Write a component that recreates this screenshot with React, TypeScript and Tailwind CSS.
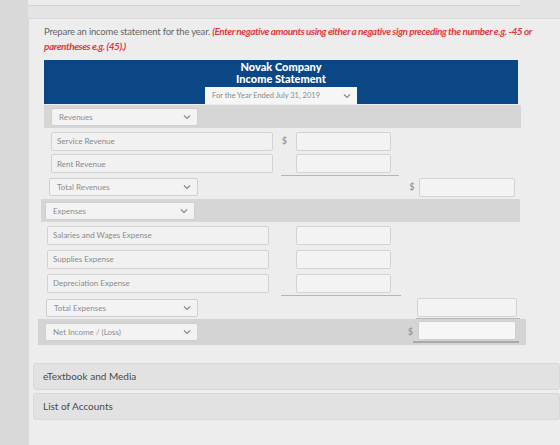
import React from "react";

const Chevron = () => (
  <svg width="8" height="6" viewBox="0 0 8 6" className="shrink-0">
    <path d="M1 1.5 L4 4.5 L7 1.5" fill="none" stroke="#8a8a8a" strokeWidth="1.2" />
  </svg>
);

const Select = ({ label, w = "w-[147px]" }: { label: string; w?: string }) => (
  <div
    className={`${w} h-[18px] bg-[#f3f3f3] border border-[#cfcfcf] rounded-[2px] flex items-center justify-between pl-[7px] pr-[6px] text-[8px] text-[#8d8d8d]`}
  >
    <span>{label}</span>
    <Chevron />
  </div>
);

const TextBox = ({ label }: { label: string }) => (
  <div className="w-[222px] h-[19px] bg-[#f1f1f1] border border-[#d3d3d3] rounded-[2px] flex items-center pl-[5px] text-[8px] text-[#8a8a8a]">
    {label}
  </div>
);

const Num = ({ w = "w-[95px]" }: { w?: string }) => (
  <div className={`${w} h-[19px] bg-[#f3f3f3] border border-[#d3d3d3] rounded-[2px]`} />
);

const Dollar = () => <span className="text-[8.5px] font-bold text-[#9a9a9a]">$</span>;

export default function App() {
  return (
    <div
      className="w-[560px] h-[445px] overflow-hidden bg-[#dcdcdc] flex"
      style={{ fontFamily: "Lato, 'Open Sans', sans-serif" }}
    >
      <div className="w-[28px] shrink-0 bg-[#d9d9d9]" />
      <div className="flex-1 flex flex-col bg-[#e4e4e4]">
        <div className="h-[6px] w-[492px] bg-[#ececec] border-b border-[#d4d4d4]" />
        <div className="h-[12px]" />
        <div className="flex-1 bg-[#ededed] border-t border-l border-[#dadada] pl-[15px] pt-[5px] flex flex-col">
          <p className="text-[9.5px] leading-[15px] text-[#666] tracking-[-0.2px] whitespace-nowrap">
            Prepare an income statement for the year.{" "}
            <span className="text-[10px] text-[#e0393e] font-bold italic tracking-[-0.45px]">
              (Enter negative amounts using either a negative sign preceding the number e.g. -45 or
            </span>
            <br />
            <span className="text-[10px] text-[#e0393e] font-bold italic tracking-[-0.45px]">
              parentheses e.g. (45).)
            </span>
          </p>

          <div className="mt-[6px] w-[474px] flex flex-col">
            {/* header */}
            <div className="h-[44px] bg-[#0b4685] flex flex-col items-center pt-[1px]">
              <div className="text-[11px] leading-[12px] font-black text-white">Novak Company</div>
              <div className="text-[11px] leading-[12px] font-black text-white">Income Statement</div>
              <div className="mt-[2px] w-[152px] h-[17px] bg-[#f6f6f6] flex items-center justify-between pl-[7px] pr-[6px] text-[7.5px] text-[#8a8a8a]">
                <span>For the Year Ended July 31, 2019</span>
                <Chevron />
              </div>
            </div>

            {/* Revenues */}
            <div className="mt-[1px] h-[23px] bg-[#d6d6d6] flex items-center pl-[7px] w-[477px]">
              <Select label="Revenues" />
            </div>

            <div className="h-[24px] flex items-center pl-[7px] mt-[1px]">
              <TextBox label="Service Revenue" />
              <div className="w-[23px] flex justify-center"><Dollar /></div>
              <Num />
            </div>
            <div className="h-[21px] flex items-center pl-[7px]">
              <TextBox label="Rent Revenue" />
              <div className="w-[23px]" />
              <Num />
            </div>
            <div className="h-[3px] flex">
              <div className="w-[237px]" />
              <div className="w-[118px] h-[1px] mt-[1px] bg-[#b5b5b5]" />
            </div>
            <div className="h-[20px] flex items-center pl-[5px]">
              <Select label="Total Revenues" w="w-[149px]" />
              <div className="w-[207px]" />
              <div className="w-[14px] flex justify-center"><Dollar /></div>
              <Num w="w-[96px]" />
            </div>

            {/* Expenses */}
            <div className="mt-[2px] h-[23px] bg-[#d6d6d6] flex items-center pl-[4px] w-[479px] -ml-[3px]">
              <Select label="Expenses" w="w-[150px]" />
            </div>

            <div className="h-[24px] flex items-center pl-[3px] mt-[1px]">
              <TextBox label="Salaries and Wages Expense" />
              <div className="w-[27px]" />
              <Num />
            </div>
            <div className="h-[24px] flex items-center pl-[3px]">
              <TextBox label="Supplies Expense" />
              <div className="w-[27px]" />
              <Num />
            </div>
            <div className="h-[24px] flex items-center pl-[3px]">
              <TextBox label="Depreciation Expense" />
              <div className="w-[27px]" />
              <Num />
            </div>
            <div className="h-[2px] flex">
              <div className="w-[237px]" />
              <div className="w-[120px] h-[1px] bg-[#b5b5b5]" />
            </div>
            <div className="h-[21px] flex items-center pl-[2px]">
              <Select label="Total Expenses" w="w-[152px]" />
              <div className="w-[219px]" />
              <Num w="w-[100px]" />
            </div>

            {/* Net income */}
            <div className="mt-[1px] h-[26px] bg-[#d4d4d4] flex items-center pl-[7px] w-[488px] -ml-[6px]">
              <Select label="Net Income / (Loss)" w="w-[153px]" />
              <div className="w-[205px]" />
              <div className="w-[15px] flex justify-center"><Dollar /></div>
              <div className="flex flex-col">
                <div className="w-[104px] h-[1px] bg-[#b8b8b8] -mt-[3px] mb-[2px] -ml-[2px]" />
                <div className="w-[98px] h-[19px] bg-[#f6f6f6] border border-[#d0d0d0] rounded-[2px]" />
                <div className="w-[106px] h-[2px] bg-[#a9a9a9] mt-[1px] -ml-[5px]" />
              </div>
            </div>
          </div>

          {/* bottom bars */}
          <div className="mt-[18px] -ml-[11px] flex flex-col gap-[3px]">
            <div className="h-[27px] bg-[#e2e2e2] border border-[#d8d8d8] rounded-[3px] flex items-center pl-[9px] text-[10px] text-[#4a4a4a]">
              eTextbook and Media
            </div>
            <div className="h-[27px] bg-[#e2e2e2] border border-[#d8d8d8] rounded-[3px] flex items-center pl-[9px] text-[10px] text-[#4a4a4a]">
              List of Accounts
            </div>
          </div>
        </div>
      </div>
    </div>
  );
}
